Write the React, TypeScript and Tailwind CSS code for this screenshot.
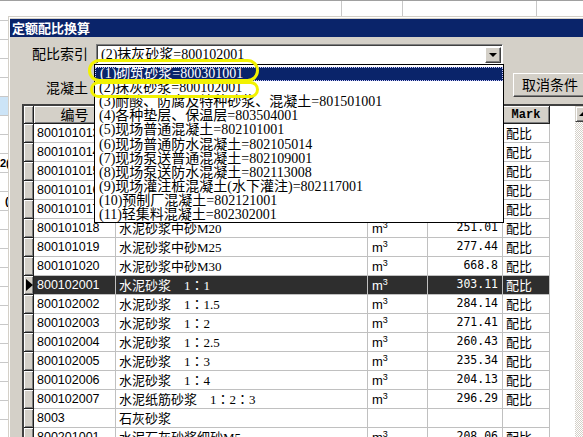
import React from "react";

const cjk = "font-['Liberation_Sans','Noto_Sans_CJK_SC',sans-serif]";
const song = "font-['Liberation_Serif','Noto_Sans_CJK_SC',sans-serif]";
const sans = "font-['Liberation_Sans',sans-serif]";
const mono = "font-['DejaVu_Sans_Mono',monospace]";
const tc = "font-['Noto_Sans_CJK_TC',sans-serif]";

type GridRow = { code: string; name: string; unit?: boolean; qty?: string; mark?: string };

const rows: GridRow[] = [
  { code: "800101013", name: "水泥砂浆中砂M5", unit: true, qty: "196.38", mark: "配比" },
  { code: "800101014", name: "水泥砂浆中砂M7.5", unit: true, qty: "204.42", mark: "配比" },
  { code: "800101015", name: "水泥砂浆中砂M10", unit: true, qty: "214.57", mark: "配比" },
  { code: "800101016", name: "水泥砂浆中砂M12.5", unit: true, qty: "226.95", mark: "配比" },
  { code: "800101017", name: "水泥砂浆中砂M15", unit: true, qty: "236.71", mark: "配比" },
  { code: "800101018", name: "水泥砂浆中砂M20", unit: true, qty: "251.01", mark: "配比" },
  { code: "800101019", name: "水泥砂浆中砂M25", unit: true, qty: "277.44", mark: "配比" },
  { code: "800101020", name: "水泥砂浆中砂M30", unit: true, qty: "668.8", mark: "配比" },
  { code: "800102001", name: "水泥砂浆\u30001：1", unit: true, qty: "303.11", mark: "配比" },
  { code: "800102002", name: "水泥砂浆\u30001：1.5", unit: true, qty: "284.14", mark: "配比" },
  { code: "800102003", name: "水泥砂浆\u30001：2", unit: true, qty: "271.41", mark: "配比" },
  { code: "800102004", name: "水泥砂浆\u30001：2.5", unit: true, qty: "260.43", mark: "配比" },
  { code: "800102005", name: "水泥砂浆\u30001：3", unit: true, qty: "235.34", mark: "配比" },
  { code: "800102006", name: "水泥砂浆\u30001：4", unit: true, qty: "204.13", mark: "配比" },
  { code: "800102007", name: "水泥纸筋砂浆\u30001：2：3", unit: true, qty: "296.29", mark: "配比" },
  { code: "8003", name: "石灰砂浆" },
  { code: "800201001", name: "水泥石灰砂浆细砂M5", unit: true, qty: "208.06", mark: "配比" },
];

const selected = 8;

const items = [
  "(1)砌筑砂浆=800301001",
  "(2)抹灰砂浆=800102001",
  "(3)耐酸、防腐及特种砂浆、混凝土=801501001",
  "(4)各种垫层、保温层=803504001",
  "(5)现场普通混凝土=802101001",
  "(6)现场普通防水混凝土=802105014",
  "(7)现场泵送普通混凝土=802109001",
  "(8)现场泵送防水混凝土=802113008",
  "(9)现场灌注桩混凝土(水下灌注)=802117001",
  "(10)预制厂混凝土=802121001",
  "(11)轻集料混凝土=802302001",
];

// full-width colon drawn centred, as the old Song font does
function Name({ text }: { text: string }) {
  const parts = text.split("：");
  return (
    <span className="whitespace-pre">
      {parts.map((p, i) => (
        <React.Fragment key={i}>
          {i > 0 && <span className={tc}>：</span>}
          {p}
        </React.Fragment>
      ))}
    </span>
  );
}

function TopStrip() {
  return (
    <div className="flex h-[16px] shrink-0 border-t border-[#a0a0a0] bg-white">
      <div className="w-[342px] border-r border-[#c8c8c8]" />
      <div className="w-[61px] border-r border-[#c8c8c8]" />
      <div className="w-[134px] border-r border-[#c8c8c8]" />
    </div>
  );
}

function LeftStrip() {
  const cells = Array.from({ length: 22 }, (_, i) => i);
  return (
    <div className={`flex w-[8px] shrink-0 flex-col overflow-hidden bg-white ${sans}`}>
      <div className="h-[5px] shrink-0 border-b border-[#c8c8c8]" />
      {cells.map((i) => (
        <div
          key={i}
          className={`flex h-[19px] shrink-0 items-center overflow-hidden border-b border-[#c8c8c8] text-[11px] font-bold leading-none ${
            i === 4 ? "bg-[#cce4f7]" : ""
          }`}
        >
          {i === 7 ? "2(" : i === 9 ? <span className="ml-[5px]">(</span> : null}
        </div>
      ))}
    </div>
  );
}

function Combo() {
  return (
    <div className="flex h-[20px] w-[407px] border-t border-l border-r border-b border-t-[#808080] border-l-[#808080] border-r-white border-b-white">
      <div className="flex flex-1 items-center border-t border-l border-t-[#404040] border-l-[#404040] bg-white pr-[1px]">
        <span className={`flex-1 pl-[3px] text-[14px] leading-[16px] text-black ${song}`}>(2)抹灰砂浆=800102001</span>
        <div className="flex h-[16px] w-[16px] items-center justify-center border-t border-l border-r border-b border-t-white border-l-white border-r-[#404040] border-b-[#404040] bg-[#d4d0c8] shadow-[inset_-1px_-1px_0_#808080]">
          <div className="h-0 w-0 border-x-[4px] border-t-[4px] border-x-transparent border-t-black" />
        </div>
      </div>
    </div>
  );
}

function Grid() {
  const cell = "shrink-0 border-r border-b border-[#c0c0c0] flex items-center overflow-hidden whitespace-nowrap";
  const fixed = "shrink-0 bg-[#d4d0c8] border-r border-b border-[#202020] shadow-[inset_1px_1px_0_#ffffff,inset_-1px_-1px_0_#808080]";
  return (
    <div className="ml-[12px] mt-[7px] flex w-[569px] flex-1 overflow-hidden border-t-2 border-l-2 border-t-[#404040] border-l-[#404040] bg-white">
      <div className="flex w-[551px] shrink-0 flex-col">
        <div className="flex h-[18px] shrink-0">
          <div className={`w-[10px] ${fixed}`} />
          <div className={`flex w-[82px] items-center justify-center text-[14px] leading-none ${cjk} ${fixed}`}>编号</div>
          <div className={`flex w-[252px] items-center justify-center text-[14px] leading-none ${cjk} ${fixed}`}>名称</div>
          <div className={`flex w-[60px] items-center justify-center text-[14px] leading-none ${cjk} ${fixed}`}>单位</div>
          <div className={`flex w-[75px] items-center justify-center text-[14px] leading-none ${cjk} ${fixed}`}>数量</div>
          <div className={`flex w-[47px] items-center justify-center text-[12px] font-bold leading-none font-['Liberation_Mono',monospace] ${fixed}`}>
            Mark
          </div>
          <div className="flex-1" />
        </div>
        {rows.map((r, i) => {
          const sel = i === selected;
          const tone = sel ? "bg-[#2e2e2e] text-white" : "bg-white text-black";
          return (
            <div key={r.code} className="flex h-[19px] shrink-0">
              <div className={`flex w-[10px] items-center justify-center ${fixed}`}>
                {sel && <div className="ml-[1px] h-0 w-0 border-y-[6px] border-l-[7px] border-y-transparent border-l-black" />}
              </div>
              <div className={`w-[82px] pl-[3px] text-[12.5px] ${sans} ${cell} ${tone}`}>{r.code}</div>
              <div className={`w-[252px] pl-[3px] text-[13px] leading-[15px] ${song} ${cell} ${tone}`}>
                <Name text={r.name} />
              </div>
              <div className={`w-[60px] pl-[4px] text-[13px] leading-[15px] ${cjk} ${cell} ${tone}`}>
                {r.unit && (
                  <span>
                    m<sup className="text-[9px]">3</sup>
                  </span>
                )}
              </div>
              <div className={`w-[75px] justify-end pr-[4px] text-[11.5px] ${mono} ${cell} ${tone}`}>{r.qty}</div>
              <div className={`w-[47px] pl-[3px] text-[13px] leading-[15px] ${cjk} ${cell} ${tone}`}>{r.mark}</div>
              <div className="flex-1" />
            </div>
          );
        })}
      </div>
      <div className="flex w-[16px] shrink-0 flex-col">
        <div className="flex h-[16px] shrink-0 items-center justify-center border-t border-l border-r border-b border-t-[#d4d0c8] border-l-[#d4d0c8] border-r-[#404040] border-b-[#404040] bg-[#d4d0c8] shadow-[inset_1px_1px_0_#ffffff,inset_-1px_-1px_0_#808080]">
          <div className="h-0 w-0 border-x-[4px] border-b-[4px] border-x-transparent border-b-black" />
        </div>
        <div className="flex-1 bg-[image:repeating-conic-gradient(#d4d0c8_0%_25%,#ffffff_0%_50%)] bg-[length:2px_2px]" />
      </div>
    </div>
  );
}

function Dialog() {
  return (
    <div className="flex min-w-0 flex-1 flex-col bg-[#d4d0c8] pl-px pt-px">
      <div className="flex flex-1 flex-col border-t border-l border-white pt-px">
        <div className={`flex h-[18px] shrink-0 items-center bg-[#0a246a] pl-[2px] text-[13px] font-bold leading-none text-white ${cjk}`}>
          定额配比换算
        </div>
        <div className="flex flex-1 flex-col overflow-hidden">
          <div className="mt-[7px] flex h-[20px] shrink-0 items-center">
            <div className={`w-[78px] text-right text-[14px] leading-[16px] ${cjk}`}>配比索引</div>
            <div className="ml-[8px]">
              <Combo />
            </div>
          </div>
          <div className="mt-[9px] flex h-[24px] shrink-0">
            <div className={`flex w-[78px] shrink-0 items-end justify-end pb-[1px] text-[14px] leading-[16px] ${cjk}`}>混凝土</div>
            <div className="w-[425px] shrink-0" />
            <div
              className={`flex h-[24px] w-[80px] shrink-0 items-center border-t border-l border-r border-b border-t-white border-l-white border-r-[#404040] border-b-[#404040] pl-[8px] text-[14px] leading-none shadow-[inset_-1px_-1px_0_#808080] ${cjk}`}
            >
              取消条件
            </div>
          </div>
          <Grid />
        </div>
      </div>
    </div>
  );
}

function DropList() {
  return (
    <div className={`absolute left-[94px] top-[64px] h-[159px] w-[410px] border border-black bg-white pt-[2px] ${song}`}>
      {items.map((t, i) => (
        <div
          key={t}
          className={`flex h-[14.1px] items-center whitespace-nowrap pl-[4px] text-[14px] leading-[14px] ${
            i === 0 ? "border border-dotted border-[#c8c8ff] bg-[#0a246a] pl-[3px] text-white" : "text-black"
          }`}
        >
          {t}
        </div>
      ))}
    </div>
  );
}

export default function App() {
  return (
    <div className="relative flex h-[437px] w-[583px] flex-col overflow-hidden bg-white">
      <TopStrip />
      <div className="flex min-h-0 flex-1">
        <LeftStrip />
        <Dialog />
      </div>
      <DropList />
      <div className="pointer-events-none absolute left-[88px] top-[59px] h-[23px] w-[171px] rounded-full border-[3px] border-[#f2f200]" />
      <div className="pointer-events-none absolute left-[90px] top-[81px] h-[17px] w-[169px] rounded-full border-[3px] border-[#f2f200]" />
    </div>
  );
}
